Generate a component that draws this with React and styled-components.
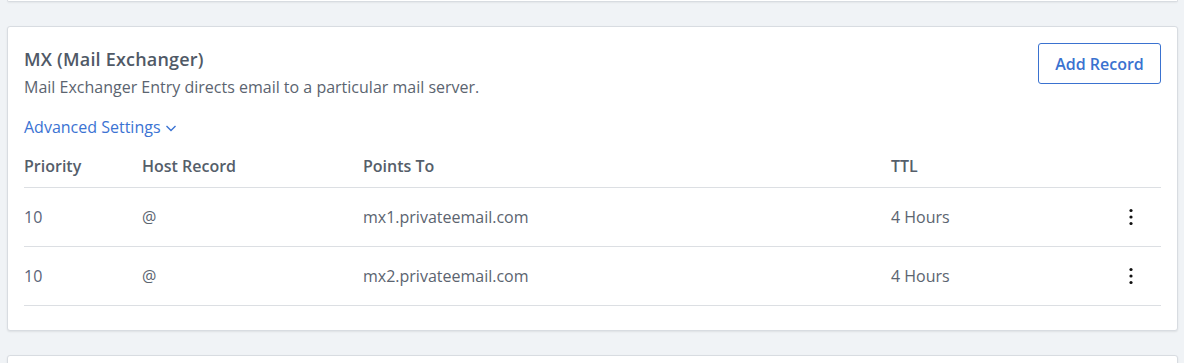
import React from "react"
import styled, { createGlobalStyle } from "styled-components"

const records = [
  { id: 1, priority: "10", host: "@", target: "mx1.privateemail.com", ttl: "4 Hours" },
  { id: 2, priority: "10", host: "@", target: "mx2.privateemail.com", ttl: "4 Hours" },
]

const COLUMNS = "118px 221px 528px 1fr 60px"

const GlobalStyle = createGlobalStyle`
  html, body {
    margin: 0;
    padding: 0;
    background: #f0f3f6;
  }
  body {
    font-family: "Open Sans", "Noto Sans", sans-serif;
    color: #5b6470;
  }
`

export default function App() {
  return (
    <>
      <GlobalStyle />
      <Page>
        <CardStub />
        <Card>
          <CardHeader>
            <div>
              <Title>MX (Mail Exchanger)</Title>
              <Description>
                Mail Exchanger Entry directs email to a particular mail server.
              </Description>
            </div>
            <OutlineButton>Add Record</OutlineButton>
          </CardHeader>

          <AdvancedLink>
            Advanced Settings
            <svg width="12" height="12" viewBox="0 0 12 12" fill="none">
              <path d="M1.5 4l4.5 4.5L10.5 4" stroke="currentColor" strokeWidth="1.4" />
            </svg>
          </AdvancedLink>

          <Table>
            <HeadRow>
              <HeadCell>Priority</HeadCell>
              <HeadCell>Host Record</HeadCell>
              <HeadCell>Points To</HeadCell>
              <HeadCell>TTL</HeadCell>
              <HeadCell />
            </HeadRow>
            {records.map(r => (
              <Row key={r.id}>
                <Cell $muted>{r.priority}</Cell>
                <Cell>{r.host}</Cell>
                <Cell>{r.target}</Cell>
                <Cell>{r.ttl}</Cell>
                <ActionCell>
                  <KebabButton aria-label="More actions">
                    <svg width="4" height="18" viewBox="0 0 4 18">
                      <circle cx="2" cy="2.5" r="1.6" fill="#111" />
                      <circle cx="2" cy="9" r="1.6" fill="#111" />
                      <circle cx="2" cy="15.5" r="1.6" fill="#111" />
                    </svg>
                  </KebabButton>
                </ActionCell>
              </Row>
            ))}
          </Table>
        </Card>
        <Card $tall />
      </Page>
    </>
  )
}

const Page = styled.div`
  display: flex;
  flex-direction: column;
  gap: 24px;
  padding: 0 6px 0 7px;
  height: 363px;
  overflow: hidden;
`

const CardStub = styled.div`
  flex: 0 0 auto;
  height: 1px;
  background: #fff;
  border: 1px solid #d8dce1;
  border-top: 0;
  border-radius: 0 0 3px 3px;
  box-shadow: 0 1px 2px rgba(0, 0, 0, 0.06);
`

const Card = styled.div`
  flex: 0 0 auto;
  background: #fff;
  border: 1px solid #d8dce1;
  border-radius: 3px;
  box-shadow: 0 1px 2px rgba(0, 0, 0, 0.08);
  padding: 16px 16px 24px;
  min-height: ${props => (props.$tall ? "60px" : "0")};
`

const CardHeader = styled.div`
  display: flex;
  justify-content: space-between;
  align-items: flex-start;
`

const Title = styled.h2`
  margin: 4px 0 0;
  font-size: 18px;
  line-height: 24px;
  font-weight: 600;
  color: #505966;
  letter-spacing: 0.2px;
`

const Description = styled.p`
  margin: 4px 0 0;
  font-size: 16px;
  line-height: 24px;
  color: #5b6470;
`

const OutlineButton = styled.button`
  width: 123px;
  height: 41px;
  background: #fff;
  border: 1px solid #3a72d0;
  border-radius: 3px;
  color: #3a72d0;
  font-family: inherit;
  font-size: 16px;
  font-weight: 600;
  cursor: pointer;
`

const AdvancedLink = styled.a`
  display: inline-flex;
  align-items: center;
  gap: 4px;
  margin-top: 16px;
  font-size: 16px;
  line-height: 24px;
  color: #3b73d3;
  cursor: pointer;

  & svg {
    margin-top: 1px;
  }
`

const Table = styled.div`
  margin-top: 6px;
`

const HeadRow = styled.div`
  display: grid;
  grid-template-columns: ${COLUMNS};
  padding: 9px 0 9px;
  border-bottom: 1px solid #dcdfe3;
`

const HeadCell = styled.div`
  font-size: 16px;
  line-height: 24px;
  font-weight: 600;
  color: #555e6a;
`

const Row = styled.div`
  display: grid;
  grid-template-columns: ${COLUMNS};
  align-items: center;
  height: 58px;
  border-bottom: 1px solid #dcdfe3;
`

const Cell = styled.div`
  font-size: 16px;
  line-height: 24px;
  color: ${props => (props.$muted ? "#5a6479" : "#5b6470")};
`

const ActionCell = styled.div`
  display: flex;
  justify-content: center;
`

const KebabButton = styled.button`
  display: flex;
  align-items: center;
  justify-content: center;
  width: 20px;
  height: 24px;
  padding: 0;
  border: 0;
  background: none;
  cursor: pointer;
`
